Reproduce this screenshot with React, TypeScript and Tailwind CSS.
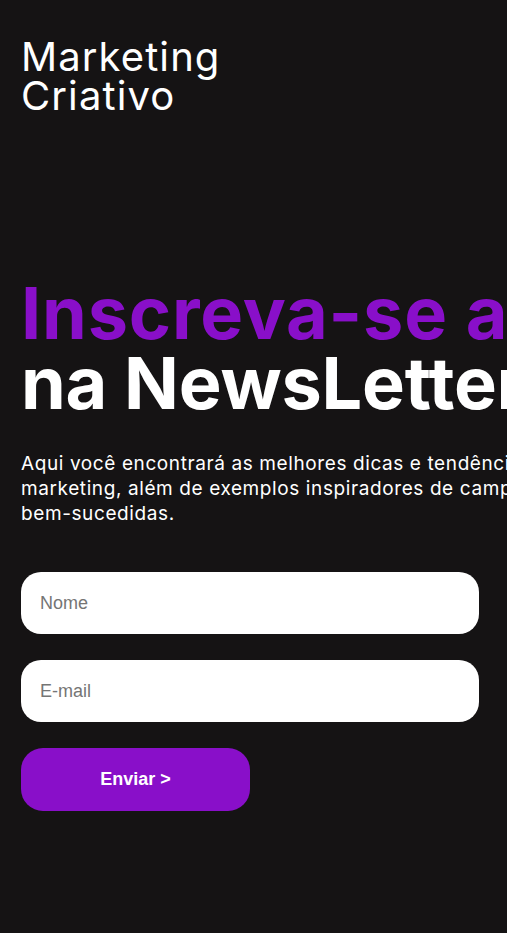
import React from "react";

export default function App() {
  return (
    <div className="min-h-[933px] w-full overflow-hidden bg-[#151314] font-['Inter',sans-serif] text-white">
      <div className="w-[720px] pl-[21px]">
        <header className="pt-[37px]">
          <h1 className="text-[40px] leading-[39px] font-normal tracking-[1.1px]">
            Marketing
            <br />
            Criativo
          </h1>
        </header>

        <section className="mt-[163px]">
          <h2 className="text-[72px] leading-[70px] font-bold whitespace-nowrap">
            <span className="block text-[#890fc9] tracking-[0.8px]">Inscreva-se agora</span>
            <span className="block text-white tracking-[-0.2px]">na NewsLetter</span>
          </h2>

          <p className="mt-[33px] text-[19px] leading-[25px] whitespace-nowrap tracking-[0.6px]">
            Aqui você encontrará as melhores dicas e tendências de
            <br />
            marketing, além de exemplos inspiradores de campanhas
            <br />
            bem-sucedidas.
          </p>

          <form className="mt-[46px] flex w-[458px] flex-col gap-[26px] font-['Liberation_Sans',Arial,sans-serif]">
            <input
              type="text"
              placeholder="Nome"
              className="h-[62px] w-full rounded-[20px] bg-white px-[19px] text-[18px] text-black placeholder:text-[#757575] outline-none"
            />
            <input
              type="email"
              placeholder="E-mail"
              className="h-[62px] w-full rounded-[20px] bg-white px-[19px] text-[18px] text-black placeholder:text-[#757575] outline-none"
            />
            <button
              type="button"
              className="h-[63px] w-[229px] rounded-[22px] bg-[#890fc9] text-[18px] font-bold text-white"
            >
              Enviar &gt;
            </button>
          </form>
        </section>
      </div>
    </div>
  );
}
